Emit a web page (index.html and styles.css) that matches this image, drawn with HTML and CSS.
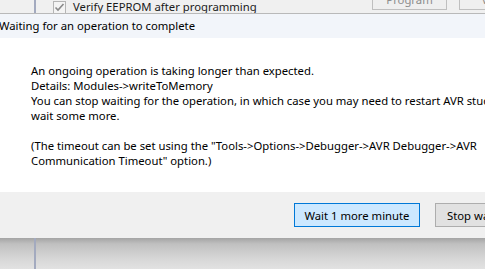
FILE: index.html
```html
<!DOCTYPE html>
<html>
<head>
<meta charset="utf-8">
<link rel="stylesheet" href="styles.css">
</head>
<body>
<div class="screen">
  <div class="backdrop">
    <div class="bar"></div>
    <div class="backrow">
      <span class="check"><svg width="13" height="13" viewBox="0 0 13 13"><rect x="0.5" y="0.5" width="12" height="12" fill="#f4f4f4" stroke="#b5b5b5"/><path d="M2.5 6.5 L5 9 L10.5 3" fill="none" stroke="#8a8a8a" stroke-width="1.6"/></svg></span>
      <span class="backlabel">Verify EEPROM after programming</span>
      <span class="backbtn prog">Program</span>
      <span class="backbtn second">Verify</span>
    </div>
  </div>
  <div class="dialog">
    <div class="titlebar">Waiting for an operation to complete</div>
    <div class="content">
      <p class="msg">An ongoing operation is taking longer than expected.<br>Details: Modules-&gt;writeToMemory<br>You can stop waiting for the operation, in which case you may need to restart AVR studio or<br>wait some more.<br><br>(The timeout can be set using the "Tools-&gt;Options-&gt;Debugger-&gt;AVR Debugger-&gt;AVR<br>Communication Timeout" option.)</p>
    </div>
    <div class="footer">
      <button class="btn primary">Wait 1 more minute</button>
      <button class="btn secondary">Stop waiting</button>
    </div>
  </div>
  <div class="shadow">
    <div class="bar"></div>
  </div>
</div>
</body>
</html>
```
FILE: styles.css
```css
html, body {
  margin: 0;
  padding: 0;
}
body {
  width: 485px;
  height: 269px;
  overflow: hidden;
  background: #f0f0f0;
  font-family: "Noto Sans", "Segoe UI", sans-serif;
  font-size: 11.3px;
  color: #000;
}
.screen {
  width: 485px;
  height: 269px;
  overflow: hidden;
  display: flex;
  flex-direction: column;
}
.backdrop {
  height: 13px;
  flex: none;
  position: relative;
  overflow: hidden;
  background: #f0f0f0;
}
.bar {
  position: absolute;
  left: 34px;
  top: 0;
  bottom: 0;
  width: 2px;
  background: #a3aabf;
}
.backrow {
  display: flex;
  align-items: flex-start;
  margin-top: -2px;
  padding-left: 53px;
  white-space: nowrap;
}
.check {
  display: block;
  width: 13px;
  height: 13px;
  margin-top: 3px;
}
.check svg { display: block; }
.backlabel {
  margin-left: 7px;
  line-height: 17px;
  color: #1a1a1a;
}
.backbtn {
  display: block;
  height: 20px;
  margin-top: -8px;
  box-sizing: border-box;
  border: 1px solid #bfbfbf;
  background: #efefef;
  color: #8d8d8d;
  text-align: center;
  line-height: 18px;
}
.prog {
  margin-left: auto;
  width: 75px;
}
.second {
  margin-left: 12px;
  width: 75px;
  margin-right: -49px;
}
.dialog {
  flex: none;
  display: flex;
  flex-direction: column;
  border-top: 1px solid #b9b9b9;
}
.titlebar {
  height: 24px;
  background: #f2f5fa;
  line-height: 23px;
  white-space: nowrap;
  margin-left: -1px;
}
.content {
  height: 154px;
  background: #fff;
  overflow: hidden;
}
.msg {
  margin: 0;
  padding: 25px 0 0 31px;
  line-height: 15px;
  white-space: nowrap;
}
.footer {
  height: 46px;
  background: #f0f0f0;
  display: flex;
  align-items: flex-start;
  padding: 11px 0 0 294px;
  box-sizing: border-box;
  gap: 15px;
  white-space: nowrap;
}
.btn {
  flex: none;
  height: 24px;
  padding: 0;
  margin: 0;
  box-sizing: border-box;
  border: 1px solid #adadad;
  background: #e1e1e1;
  font-family: inherit;
  font-size: 11.3px;
  color: #000;
  line-height: 21px;
}
.btn.primary {
  width: 126px;
  border-color: #0078d7;
  background: #cce8ff;
}
.btn.secondary {
  padding: 0 11px;
}
.shadow {
  flex: 1;
  position: relative;
  background: linear-gradient(to bottom, #a4a4a4 0px, #c0c0c0 6px, #d6d6d6 20px, #e2e2e2 100%);
}
```
